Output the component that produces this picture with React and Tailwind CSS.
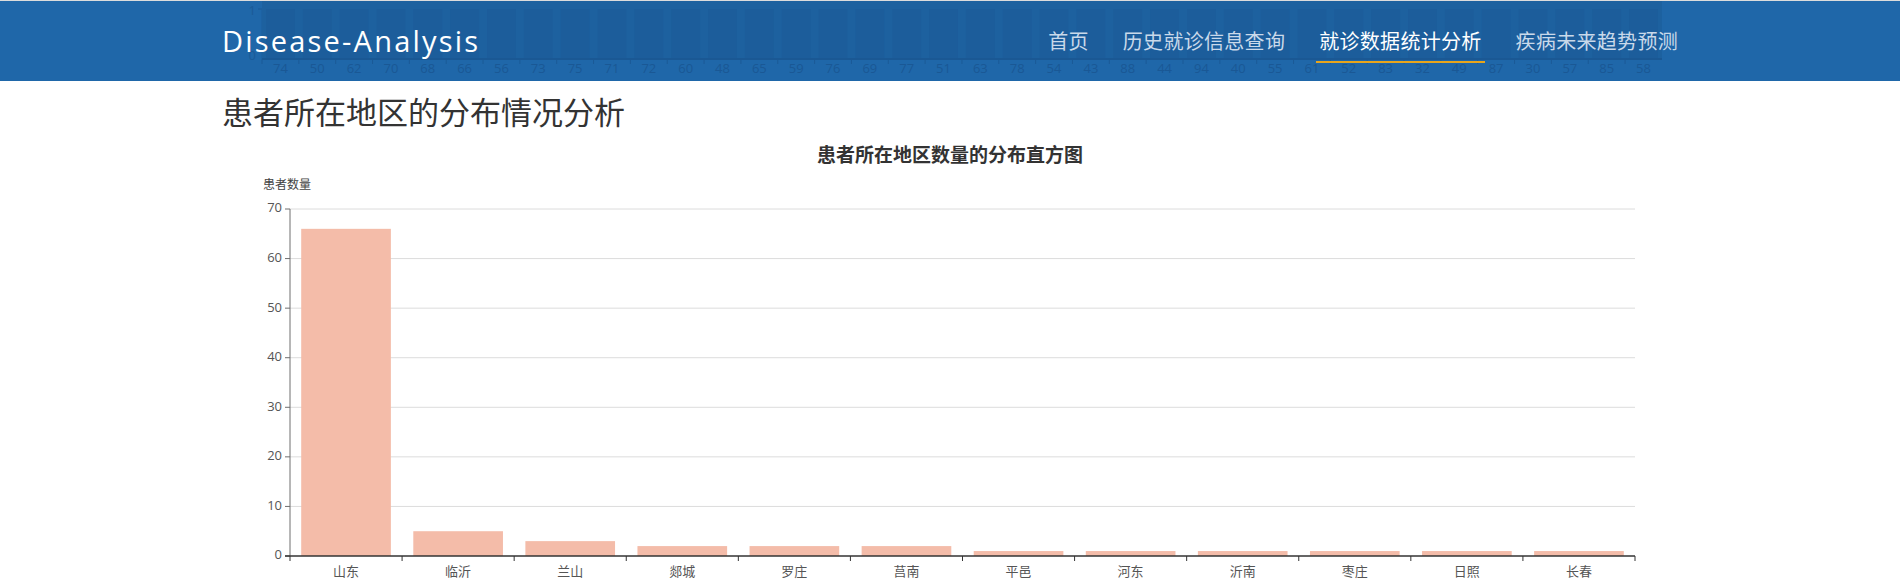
const bgNums = [74, 50, 62, 70, 68, 66, 56, 73, 75, 71, 72, 60, 48, 65, 59, 76, 69, 77, 51, 63, 78, 54, 43, 88, 44, 94, 40, 55, 61, 52, 83, 32, 49, 87, 30, 57, 85, 58];

const data = [
  { name: "山东", value: 66 },
  { name: "临沂", value: 5 },
  { name: "兰山", value: 3 },
  { name: "郯城", value: 2 },
  { name: "罗庄", value: 2 },
  { name: "莒南", value: 2 },
  { name: "平邑", value: 1 },
  { name: "河东", value: 1 },
  { name: "沂南", value: 1 },
  { name: "枣庄", value: 1 },
  { name: "日照", value: 1 },
  { name: "长春", value: 1 },
];

const navItems = ["首页", "历史就诊信息查询", "就诊数据统计分析", "疾病未来趋势预测"];

// faint chart that bleeds through the header
const HeaderGhost = () => {
  const x0 = 262;
  const band = 36.84;
  return (
    <svg className="absolute left-0 top-0" width="1900" height="80">
      <text x={x0 - 6} y="11" fontSize="13" fill="#1b5b98" textAnchor="end" dominantBaseline="middle">1</text>
      <text x={x0 - 6} y="56" fontSize="13" fill="#1b5b98" textAnchor="end" dominantBaseline="middle">0</text>
      <line x1={x0 - 4} y1="8" x2={x0} y2="8" stroke="#1b5b98" />
      <line x1={x0} y1="8" x2={x0} y2="58" stroke="#1d5e9c" />
      <rect x={x0} y="0" width={band * 38} height="58" fill="#1d619f" />
      {bgNums.map((n, i) => (
        <g key={i}>
          <rect x={x0 + i * band + 4} y="8" width={band - 8} height="50" fill="#1c5d9b" />
          <line x1={x0 + i * band} y1="58" x2={x0 + i * band} y2="63" stroke="#1b5a97" />
          <text
            x={x0 + i * band + band / 2}
            y="69"
            fontSize="13"
            fill="#1a5895"
            textAnchor="middle"
            dominantBaseline="middle"
            fontFamily="'Open Sans', sans-serif"
          >
            {n}
          </text>
        </g>
      ))}
      <line x1={x0} y1="58" x2={x0 + band * 38} y2="58" stroke="#1a5894" strokeWidth="2" />
    </svg>
  );
};

const Header = () => (
  <div className="relative h-[81px] overflow-hidden border-t border-[#dcdcdc] bg-[#1f67a9]">
    <HeaderGhost />
    <div className="relative mx-auto flex h-full w-[1456px] items-center justify-between">
      <h1 className="mb-[2px] font-['Open_Sans',sans-serif] text-[29px] leading-none tracking-[2.2px] text-white">
        Disease-Analysis
      </h1>
      <ul className="flex h-full items-center font-['Noto_Sans_CJK_SC',sans-serif] text-[20px] tracking-[0.3px]">
        {navItems.map((item, i) => (
          <li key={item} className={`relative px-[17px] ${i === navItems.length - 1 ? "pr-0" : ""}`}>
            <span className={i === 2 ? "text-white" : "text-[#c9d9ea]"}>{item}</span>
            {i === 2 && (
              <span className="absolute bottom-[-7px] left-[14px] right-[14px] h-[2px] bg-[#e7a51c]" />
            )}
          </li>
        ))}
      </ul>
    </div>
  </div>
);

const BarChart = () => {
  const left = 68;
  const right = 1413;
  const zeroY = 421;
  const topY = 74;
  const unit = (zeroY - topY) / 70;
  const band = (right - left) / data.length;
  const ticks = [0, 10, 20, 30, 40, 50, 60, 70];
  return (
    <svg width="1456" height="451" className="block font-['Noto_Sans_CJK_SC',sans-serif]">
      <text x="728" y="22" fontSize="19" fontWeight="700" fill="#333" textAnchor="middle" dominantBaseline="middle">
        患者所在地区数量的分布直方图
      </text>
      <text x="41" y="51" fontSize="12" fill="#444" dominantBaseline="middle">
        患者数量
      </text>
      {ticks.map((t) => {
        const y = zeroY - t * unit;
        return (
          <g key={t}>
            {t > 0 && <line x1={left} y1={y} x2={right} y2={y} stroke="#dcdcdc" />}
            <line x1={left - 5} y1={y} x2={left} y2={y} stroke="#6e6e6e" />
            <text x={left - 8} y={y} fontSize="13" fill="#555" textAnchor="end" dominantBaseline="middle" fontFamily="'Open Sans', sans-serif">
              {t}
            </text>
          </g>
        );
      })}
      {data.map((d, i) => {
        const h = d.value * unit;
        return (
          <g key={d.name}>
            <rect x={left + i * band + band * 0.1} y={zeroY - h} width={band * 0.8} height={h} fill="#f4bca9" />
            <text x={left + i * band + band / 2} y="437" fontSize="13" fill="#555" textAnchor="middle" dominantBaseline="middle">
              {d.name}
            </text>
          </g>
        );
      })}
      {data.map((d, i) => (
        <line key={i} x1={left + i * band} y1={zeroY} x2={left + i * band} y2={zeroY + 5} stroke="#333" />
      ))}
      <line x1={right} y1={zeroY} x2={right} y2={zeroY + 5} stroke="#333" />
      <line x1={left} y1={topY} x2={left} y2={zeroY} stroke="#6e6e6e" />
      <line x1={left - 5} y1={zeroY} x2={right} y2={zeroY} stroke="#333" strokeWidth="1.5" />
    </svg>
  );
};

export default function App() {
  return (
    <div className="h-[586px] overflow-hidden bg-white">
      <Header />
      <div className="mx-auto w-[1456px]">
        <h2 className="mt-[10px] font-['Noto_Sans_CJK_SC',sans-serif] text-[31px] font-normal leading-[40px] text-[#333]">
          患者所在地区的分布情况分析
        </h2>
        <div className="mt-[4px]">
          <BarChart />
        </div>
      </div>
    </div>
  );
}
